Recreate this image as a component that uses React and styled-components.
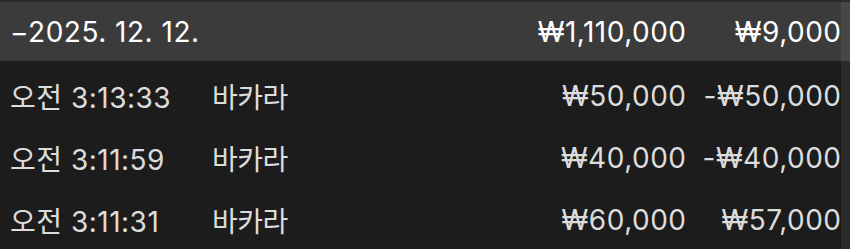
import styled, { createGlobalStyle } from 'styled-components'

const GlobalStyle = createGlobalStyle`
    html, body {
        margin: 0;
        padding: 0;
        background: #1c1c1c;
    }
    body {
        font-family: Inter, "Noto Sans CJK KR", sans-serif;
        -webkit-font-smoothing: antialiased;
    }
`

const Page = styled.div`
    display: flex;
    width: 850px;
    height: 249px;
    overflow: hidden;
    background: #1c1c1c;
    border-top: 2px solid #2b2b2b;
    box-sizing: border-box;
`

const Table = styled.div`
    flex: 1;
    display: flex;
    flex-direction: column;
`

const Row = styled.div`
    display: grid;
    grid-template-columns: 202px 1fr auto 155px;
    align-items: center;
    box-sizing: border-box;
    height: ${(p) => (p.$head ? '59px' : '62px')};
    padding: ${(p) => (p.$head ? '0 0 0 10px' : '8px 0 0 10px')};
    background: ${(p) => (p.$head ? '#3b3b3b' : '#1c1c1c')};
    color: ${(p) => (p.$head ? '#ffffff' : '#dcdcdc')};
    font-size: 28px;
    letter-spacing: 0.5px;
    white-space: nowrap;
`

const Cell = styled.span`
    text-align: ${(p) => (p.$right ? 'right' : 'left')};
    margin-right: ${(p) => (p.$right ? '-0.5px' : '0')};
    letter-spacing: ${(p) => (p.$hangul ? '-0.5px' : 'inherit')};
`

const Track = styled.div`
    width: 9px;
    display: flex;
    flex-direction: column;
`

const TrackPart = styled.div`
    height: ${(p) => (p.$head ? '59px' : 'auto')};
    flex: ${(p) => (p.$head ? 'none' : '1')};
    background: ${(p) => (p.$head ? '#474747' : '#2b2b2b')};
`

const rows = [
    { time: '오전 3:13:33', game: '바카라', bet: '₩50,000', result: '-₩50,000' },
    { time: '오전 3:11:59', game: '바카라', bet: '₩40,000', result: '-₩40,000' },
    { time: '오전 3:11:31', game: '바카라', bet: '₩60,000', result: '₩57,000' },
]

const App = () => {
    return (
        <>
            <GlobalStyle />
            <Page>
                <Table>
                    <Row $head>
                        <Cell>−2025. 12. 12.</Cell>
                        <Cell />
                        <Cell $right>₩1,110,000</Cell>
                        <Cell $right>₩9,000</Cell>
                    </Row>
                    {rows.map((row) => (
                        <Row key={row.time}>
                            <Cell>{row.time}</Cell>
                            <Cell $hangul>{row.game}</Cell>
                            <Cell $right>{row.bet}</Cell>
                            <Cell $right>{row.result}</Cell>
                        </Row>
                    ))}
                </Table>
                <Track>
                    <TrackPart $head />
                    <TrackPart />
                </Track>
            </Page>
        </>
    )
}

export default App
